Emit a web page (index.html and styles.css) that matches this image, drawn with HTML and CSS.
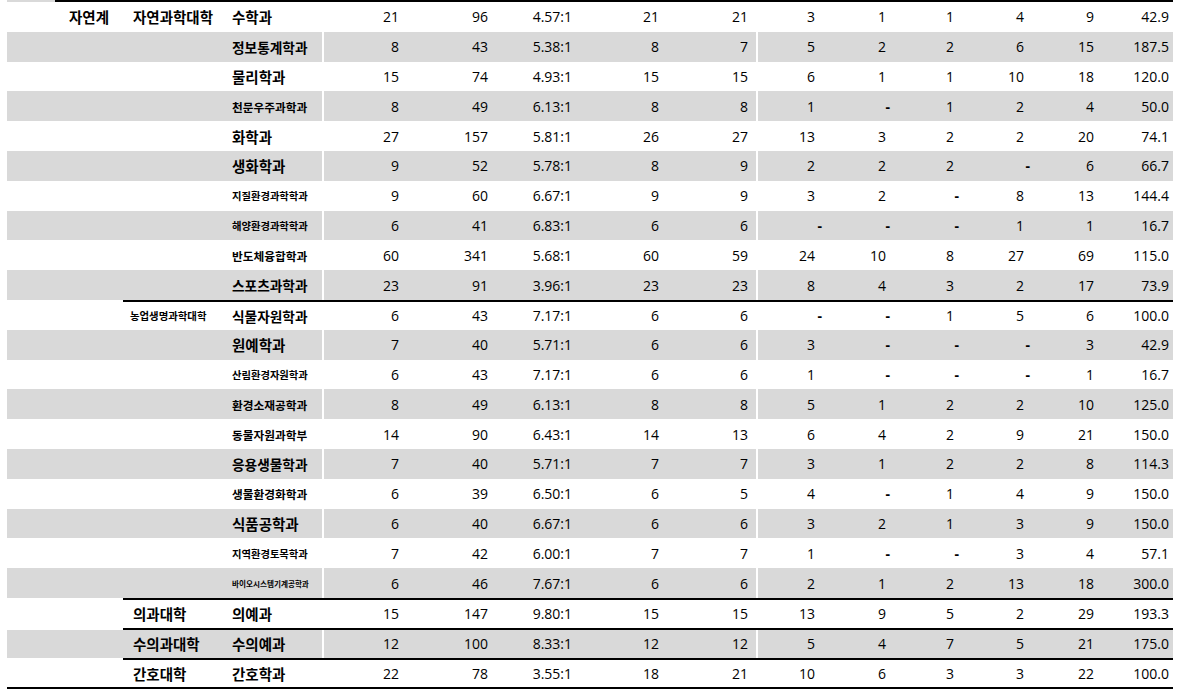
FILE: index.html
```html
<!DOCTYPE html>
<html lang="ko">
<head>
<meta charset="utf-8">
<title>모집 결과</title>
<link rel="stylesheet" href="styles.css">
</head>
<body>
<div class="sheet">
  <div class="top"><span class="top-gray"></span><span class="top-line"></span></div>

  <div class="row">
    <div class="blk blk-l"><span></span><span class="ca ko">자연계</span><span class="cb ko">자연과학대학</span><span class="cc ko">수학과</span></div>
    <div class="blk blk-m"><span class="n">21</span><span class="n">96</span><span class="n">4.57:1</span><span class="n">21</span><span class="n">21</span></div>
    <div class="blk blk-r"><span class="n">3</span><span class="n">1</span><span class="n">1</span><span class="n">4</span><span class="n">9</span><span class="n">42.9</span></div>
  </div>
  <div class="row g">
    <div class="blk blk-l"><span></span><span></span><span></span><span class="cc ko fs6">정보통계학과</span></div>
    <div class="blk blk-m"><span class="n">8</span><span class="n">43</span><span class="n">5.38:1</span><span class="n">8</span><span class="n">7</span></div>
    <div class="blk blk-r"><span class="n">5</span><span class="n">2</span><span class="n">2</span><span class="n">6</span><span class="n">15</span><span class="n">187.5</span></div>
  </div>
  <div class="row">
    <div class="blk blk-l"><span></span><span></span><span></span><span class="cc ko">물리학과</span></div>
    <div class="blk blk-m"><span class="n">15</span><span class="n">74</span><span class="n">4.93:1</span><span class="n">15</span><span class="n">15</span></div>
    <div class="blk blk-r"><span class="n">6</span><span class="n">1</span><span class="n">1</span><span class="n">10</span><span class="n">18</span><span class="n">120.0</span></div>
  </div>
  <div class="row g">
    <div class="blk blk-l"><span></span><span></span><span></span><span class="cc ko fs7">천문우주과학과</span></div>
    <div class="blk blk-m"><span class="n">8</span><span class="n">49</span><span class="n">6.13:1</span><span class="n">8</span><span class="n">8</span></div>
    <div class="blk blk-r"><span class="n">1</span><span class="n z">-</span><span class="n">1</span><span class="n">2</span><span class="n">4</span><span class="n">50.0</span></div>
  </div>
  <div class="row">
    <div class="blk blk-l"><span></span><span></span><span></span><span class="cc ko">화학과</span></div>
    <div class="blk blk-m"><span class="n">27</span><span class="n">157</span><span class="n">5.81:1</span><span class="n">26</span><span class="n">27</span></div>
    <div class="blk blk-r"><span class="n">13</span><span class="n">3</span><span class="n">2</span><span class="n">2</span><span class="n">20</span><span class="n">74.1</span></div>
  </div>
  <div class="row g">
    <div class="blk blk-l"><span></span><span></span><span></span><span class="cc ko">생화학과</span></div>
    <div class="blk blk-m"><span class="n">9</span><span class="n">52</span><span class="n">5.78:1</span><span class="n">8</span><span class="n">9</span></div>
    <div class="blk blk-r"><span class="n">2</span><span class="n">2</span><span class="n">2</span><span class="n z">-</span><span class="n">6</span><span class="n">66.7</span></div>
  </div>
  <div class="row">
    <div class="blk blk-l"><span></span><span></span><span></span><span class="cc ko fs8">지질환경과학학과</span></div>
    <div class="blk blk-m"><span class="n">9</span><span class="n">60</span><span class="n">6.67:1</span><span class="n">9</span><span class="n">9</span></div>
    <div class="blk blk-r"><span class="n">3</span><span class="n">2</span><span class="n z">-</span><span class="n">8</span><span class="n">13</span><span class="n">144.4</span></div>
  </div>
  <div class="row g">
    <div class="blk blk-l"><span></span><span></span><span></span><span class="cc ko fs8">해양환경과학학과</span></div>
    <div class="blk blk-m"><span class="n">6</span><span class="n">41</span><span class="n">6.83:1</span><span class="n">6</span><span class="n">6</span></div>
    <div class="blk blk-r"><span class="n z">-</span><span class="n z">-</span><span class="n z">-</span><span class="n">1</span><span class="n">1</span><span class="n">16.7</span></div>
  </div>
  <div class="row">
    <div class="blk blk-l"><span></span><span></span><span></span><span class="cc ko fs7">반도체융합학과</span></div>
    <div class="blk blk-m"><span class="n">60</span><span class="n">341</span><span class="n">5.68:1</span><span class="n">60</span><span class="n">59</span></div>
    <div class="blk blk-r"><span class="n">24</span><span class="n">10</span><span class="n">8</span><span class="n">27</span><span class="n">69</span><span class="n">115.0</span></div>
  </div>
  <div class="row g">
    <div class="blk blk-l"><span></span><span></span><span></span><span class="cc ko fs6">스포츠과학과</span></div>
    <div class="blk blk-m"><span class="n">23</span><span class="n">91</span><span class="n">3.96:1</span><span class="n">23</span><span class="n">23</span></div>
    <div class="blk blk-r"><span class="n">8</span><span class="n">4</span><span class="n">3</span><span class="n">2</span><span class="n">17</span><span class="n">73.9</span></div>
  </div>

  <div class="rule"></div>
  <div class="row after">
    <div class="blk blk-l"><span></span><span></span><span class="cb cb-small ko">농업생명과학대학</span><span class="cc ko fs6">식물자원학과</span></div>
    <div class="blk blk-m"><span class="n">6</span><span class="n">43</span><span class="n">7.17:1</span><span class="n">6</span><span class="n">6</span></div>
    <div class="blk blk-r"><span class="n z">-</span><span class="n z">-</span><span class="n">1</span><span class="n">5</span><span class="n">6</span><span class="n">100.0</span></div>
  </div>
  <div class="row g">
    <div class="blk blk-l"><span></span><span></span><span></span><span class="cc ko">원예학과</span></div>
    <div class="blk blk-m"><span class="n">7</span><span class="n">40</span><span class="n">5.71:1</span><span class="n">6</span><span class="n">6</span></div>
    <div class="blk blk-r"><span class="n">3</span><span class="n z">-</span><span class="n z">-</span><span class="n z">-</span><span class="n">3</span><span class="n">42.9</span></div>
  </div>
  <div class="row">
    <div class="blk blk-l"><span></span><span></span><span></span><span class="cc ko fs8">산림환경자원학과</span></div>
    <div class="blk blk-m"><span class="n">6</span><span class="n">43</span><span class="n">7.17:1</span><span class="n">6</span><span class="n">6</span></div>
    <div class="blk blk-r"><span class="n">1</span><span class="n z">-</span><span class="n z">-</span><span class="n z">-</span><span class="n">1</span><span class="n">16.7</span></div>
  </div>
  <div class="row g">
    <div class="blk blk-l"><span></span><span></span><span></span><span class="cc ko fs7">환경소재공학과</span></div>
    <div class="blk blk-m"><span class="n">8</span><span class="n">49</span><span class="n">6.13:1</span><span class="n">8</span><span class="n">8</span></div>
    <div class="blk blk-r"><span class="n">5</span><span class="n">1</span><span class="n">2</span><span class="n">2</span><span class="n">10</span><span class="n">125.0</span></div>
  </div>
  <div class="row">
    <div class="blk blk-l"><span></span><span></span><span></span><span class="cc ko fs7">동물자원과학부</span></div>
    <div class="blk blk-m"><span class="n">14</span><span class="n">90</span><span class="n">6.43:1</span><span class="n">14</span><span class="n">13</span></div>
    <div class="blk blk-r"><span class="n">6</span><span class="n">4</span><span class="n">2</span><span class="n">9</span><span class="n">21</span><span class="n">150.0</span></div>
  </div>
  <div class="row g">
    <div class="blk blk-l"><span></span><span></span><span></span><span class="cc ko fs6">응용생물학과</span></div>
    <div class="blk blk-m"><span class="n">7</span><span class="n">40</span><span class="n">5.71:1</span><span class="n">7</span><span class="n">7</span></div>
    <div class="blk blk-r"><span class="n">3</span><span class="n">1</span><span class="n">2</span><span class="n">2</span><span class="n">8</span><span class="n">114.3</span></div>
  </div>
  <div class="row">
    <div class="blk blk-l"><span></span><span></span><span></span><span class="cc ko fs7">생물환경화학과</span></div>
    <div class="blk blk-m"><span class="n">6</span><span class="n">39</span><span class="n">6.50:1</span><span class="n">6</span><span class="n">5</span></div>
    <div class="blk blk-r"><span class="n">4</span><span class="n z">-</span><span class="n">1</span><span class="n">4</span><span class="n">9</span><span class="n">150.0</span></div>
  </div>
  <div class="row g">
    <div class="blk blk-l"><span></span><span></span><span></span><span class="cc ko">식품공학과</span></div>
    <div class="blk blk-m"><span class="n">6</span><span class="n">40</span><span class="n">6.67:1</span><span class="n">6</span><span class="n">6</span></div>
    <div class="blk blk-r"><span class="n">3</span><span class="n">2</span><span class="n">1</span><span class="n">3</span><span class="n">9</span><span class="n">150.0</span></div>
  </div>
  <div class="row">
    <div class="blk blk-l"><span></span><span></span><span></span><span class="cc ko fs8">지역환경토목학과</span></div>
    <div class="blk blk-m"><span class="n">7</span><span class="n">42</span><span class="n">6.00:1</span><span class="n">7</span><span class="n">7</span></div>
    <div class="blk blk-r"><span class="n">1</span><span class="n z">-</span><span class="n z">-</span><span class="n">3</span><span class="n">4</span><span class="n">57.1</span></div>
  </div>
  <div class="row g">
    <div class="blk blk-l"><span></span><span></span><span></span><span class="cc ko fs11">바이오시스템기계공학과</span></div>
    <div class="blk blk-m"><span class="n">6</span><span class="n">46</span><span class="n">7.67:1</span><span class="n">6</span><span class="n">6</span></div>
    <div class="blk blk-r"><span class="n">2</span><span class="n">1</span><span class="n">2</span><span class="n">13</span><span class="n">18</span><span class="n">300.0</span></div>
  </div>

  <div class="rule"></div>
  <div class="row after">
    <div class="blk blk-l"><span></span><span></span><span class="cb ko">의과대학</span><span class="cc ko">의예과</span></div>
    <div class="blk blk-m"><span class="n">15</span><span class="n">147</span><span class="n">9.80:1</span><span class="n">15</span><span class="n">15</span></div>
    <div class="blk blk-r"><span class="n">13</span><span class="n">9</span><span class="n">5</span><span class="n">2</span><span class="n">29</span><span class="n">193.3</span></div>
  </div>
  <div class="rule"></div>
  <div class="row g after">
    <div class="blk blk-l"><span></span><span></span><span class="cb ko">수의과대학</span><span class="cc ko">수의예과</span></div>
    <div class="blk blk-m"><span class="n">12</span><span class="n">100</span><span class="n">8.33:1</span><span class="n">12</span><span class="n">12</span></div>
    <div class="blk blk-r"><span class="n">5</span><span class="n">4</span><span class="n">7</span><span class="n">5</span><span class="n">21</span><span class="n">175.0</span></div>
  </div>
  <div class="rule"></div>
  <div class="row after">
    <div class="blk blk-l"><span></span><span></span><span class="cb ko">간호대학</span><span class="cc ko">간호학과</span></div>
    <div class="blk blk-m"><span class="n">22</span><span class="n">78</span><span class="n">3.55:1</span><span class="n">18</span><span class="n">21</span></div>
    <div class="blk blk-r"><span class="n">10</span><span class="n">6</span><span class="n">3</span><span class="n">3</span><span class="n">22</span><span class="n">100.0</span></div>
  </div>
  <div class="bottom"></div>
</div>
</body>
</html>
```

FILE: styles.css
```css
* {
  box-sizing: border-box;
}

html, body {
  margin: 0;
  padding: 0;
  background: #ffffff;
}

body {
  font-family: "Open Sans", "Noto Sans", "Liberation Sans", sans-serif;
  color: #000000;
}

.sheet {
  padding-left: 7px;
  width: 1173px;
}

.top {
  display: flex;
  height: 2px;
}

.top-gray {
  width: 48px;
  background: #d9d9d9;
}

.top-line {
  flex: 1;
  background: #000000;
}

.row {
  display: flex;
  gap: 2px;
  height: 29.8px;
}

.row.after {
  height: 27.8px;
}

.rule {
  height: 2px;
  margin-left: 116px;
  background: #000000;
}

.bottom {
  height: 2px;
  background: #000000;
}

.blk {
  display: grid;
  height: 100%;
}

.blk-l {
  grid-template-columns: 48px 68px 101px 98px;
}

.blk-m {
  grid-template-columns: 85px 89px 84px 87px 87px;
}

.blk-r {
  grid-template-columns: 67px 71px 68px 70px 70px 69px;
}

.g .blk {
  background: #d9d9d9;
}

.blk > span {
  display: flex;
  align-items: center;
  white-space: nowrap;
  overflow: hidden;
  min-width: 0;
}

.ko {
  font-family: "Noto Sans CJK KR", "Noto Sans", sans-serif;
  font-weight: 700;
  font-size: 14.5px;
}

.ca {
  justify-content: center;
}

.cb {
  padding-left: 10px;
}

.cb-small {
  padding-left: 7px;
  font-size: 10.4px;
}

.cc {
  padding-left: 8px;
}

.fs6 {
  font-size: 13.7px;
}

.fs7 {
  font-size: 11.7px;
}

.fs8 {
  font-size: 10.3px;
}

.fs11 {
  font-size: 7.6px;
}

.n {
  justify-content: flex-end;
  padding-right: 10px;
  font-size: 14px;
}

.z {
  font-weight: 700;
}

.blk-m > .n:nth-child(5) {
  padding-right: 8px;
}

.blk-r > .n:nth-child(6) {
  padding-right: 4px;
}

.blk-r > .z:nth-child(1) {
  padding-right: 3px;
}

.blk-r > .z:nth-child(2) {
  padding-right: 6px;
}

.blk-r > .z:nth-child(3) {
  padding-right: 5px;
}

.blk-r > .z:nth-child(4) {
  padding-right: 4px;
}
```
